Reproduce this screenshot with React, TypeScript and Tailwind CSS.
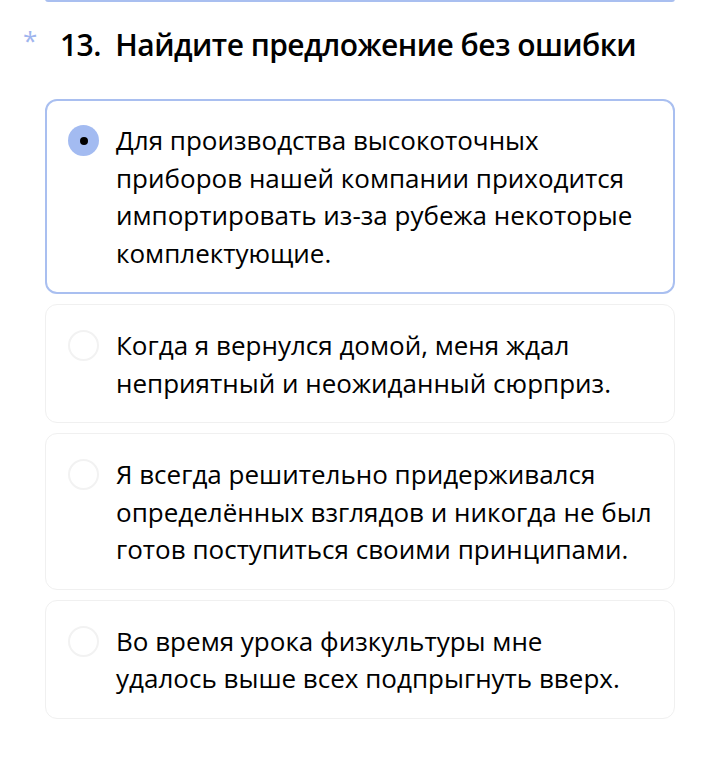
import React from 'react';

const options: string[][] = [
  ['Для производства высокоточных', 'приборов нашей компании приходится', 'импортировать из-за рубежа некоторые', 'комплектующие.'],
  ['Когда я вернулся домой, меня ждал', 'неприятный и неожиданный сюрприз.'],
  ['Я всегда решительно придерживался', 'определённых взглядов и никогда не был', 'готов поступиться своими принципами.'],
  ['Во время урока физкультуры мне', 'удалось выше всех подпрыгнуть вверх.'],
];

const App: React.FC = () => {
  const selected = 0;

  return (
    <div className="w-[720px] h-[763px] bg-white overflow-hidden text-black" style={{ fontFamily: '"Open Sans", "Noto Sans", sans-serif' }}>
      <div className="mx-[45px] h-[3px] -mt-[1px] rounded-b-[12px] border-2 border-t-0 border-[#a9bff0]" />

      <div className="flex items-start pl-[23px] pt-[23px] pb-[34px]">
        <span className="w-[37px] text-[26px] leading-[30px] text-[#9fb5ee]">*</span>
        <h2 className="text-[30px] leading-[40px] font-semibold tracking-[-0.55px]">13.&nbsp; Найдите предложение без ошибки</h2>
      </div>

      <div className="flex flex-col gap-[10px] px-[45px]">
        {options.map((lines, i) => {
          const active = i === selected;
          return (
            <label
              key={i}
              className={
                active
                  ? 'flex items-start rounded-[12px] border-2 border-[#a9bff0] pl-[21px] pt-[21px] pb-[20px]'
                  : 'flex items-start rounded-[12px] border border-[#f0f0f0] pl-[22px] pt-[22px] pb-[20px]'
              }
            >
              <span
                className={
                  active
                    ? 'mt-[3px] flex h-[31px] w-[31px] shrink-0 items-center justify-center rounded-full bg-[#a3bbf1]'
                    : 'mt-[3px] h-[31px] w-[31px] shrink-0 rounded-full border-2 border-[#f2f2f2]'
                }
              >
                {active && <span className="h-[8px] w-[8px] rounded-full bg-black" />}
              </span>
              <span className="ml-[17px] whitespace-nowrap text-[26px] leading-[37.5px]">
                {lines.map((line, j) => (
                  <React.Fragment key={j}>
                    {j > 0 && <br />}
                    {line}
                  </React.Fragment>
                ))}
              </span>
            </label>
          );
        })}
      </div>
    </div>
  );
};

export default App;
